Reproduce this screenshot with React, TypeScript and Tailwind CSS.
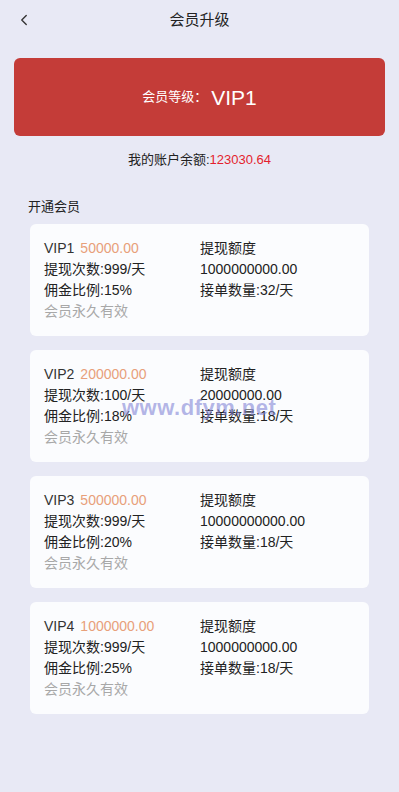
import { ChevronLeft } from "lucide-react";

const plans = [
  { name: "VIP1", price: "50000.00", times: "999/天", rate: "15%", limit: "1000000000.00", orders: "32/天" },
  { name: "VIP2", price: "200000.00", times: "100/天", rate: "18%", limit: "20000000.00", orders: "18/天" },
  { name: "VIP3", price: "500000.00", times: "999/天", rate: "20%", limit: "10000000000.00", orders: "18/天" },
  { name: "VIP4", price: "1000000.00", times: "999/天", rate: "25%", limit: "1000000000.00", orders: "18/天" },
];

const font = { fontFamily: '"Liberation Sans", Arial, "Noto Sans CJK SC", sans-serif' };

export default function App() {
  return (
    <div className="relative min-h-[792px] w-full bg-[#e8e9f5] text-[#222]" style={font}>
      <header className="relative flex h-10 items-center justify-center">
        <ChevronLeft className="absolute left-[15px] top-[11px] h-[18px] w-[18px] text-[#333]" strokeWidth={1.8} />
        <h1 className="text-[15px] text-[#222]">会员升级</h1>
      </header>

      <div className="mx-[14px] mt-[18px] flex h-[78px] items-center justify-center rounded-[6px] bg-[#c43c38] text-white">
        <span className="text-[13px]">会员等级：</span>
        <span className="ml-[4px] text-[21px] leading-none">VIP1</span>
      </div>

      <p className="mt-[15px] text-center text-[13px] leading-[18px]">
        我的账户余额:<span className="text-[#e41f2e]">123030.64</span>
      </p>

      <h2 className="ml-[28px] mt-[29px] text-[13px] leading-[18px]">开通会员</h2>

      <div className="mx-[30px] mt-[8px] flex flex-col gap-[14px]">
        {plans.map((p) => (
          <div key={p.name} className="rounded-[6px] bg-[#fbfcfe] px-[14px] py-[14px] text-[14px] leading-[21px]">
            <div className="grid grid-cols-[156px_1fr]">
              <div>
                <span className="text-[#333]">{p.name}</span>
                <span className="ml-[6px] text-[#e8a07a]">{p.price}</span>
              </div>
              <div>提现额度</div>
              <div>提现次数:{p.times}</div>
              <div>{p.limit}</div>
              <div>佣金比例:{p.rate}</div>
              <div>接单数量:{p.orders}</div>
              <div className="text-[#a8a8a8]">会员永久有效</div>
            </div>
          </div>
        ))}
      </div>

      {/* 水印 */}
      <div className="pointer-events-none absolute left-[122px] top-[397px] text-[22px] font-bold leading-none tracking-[0.5px] text-[#8386d6]/60">
        www.dfym.net
      </div>
    </div>
  );
}
